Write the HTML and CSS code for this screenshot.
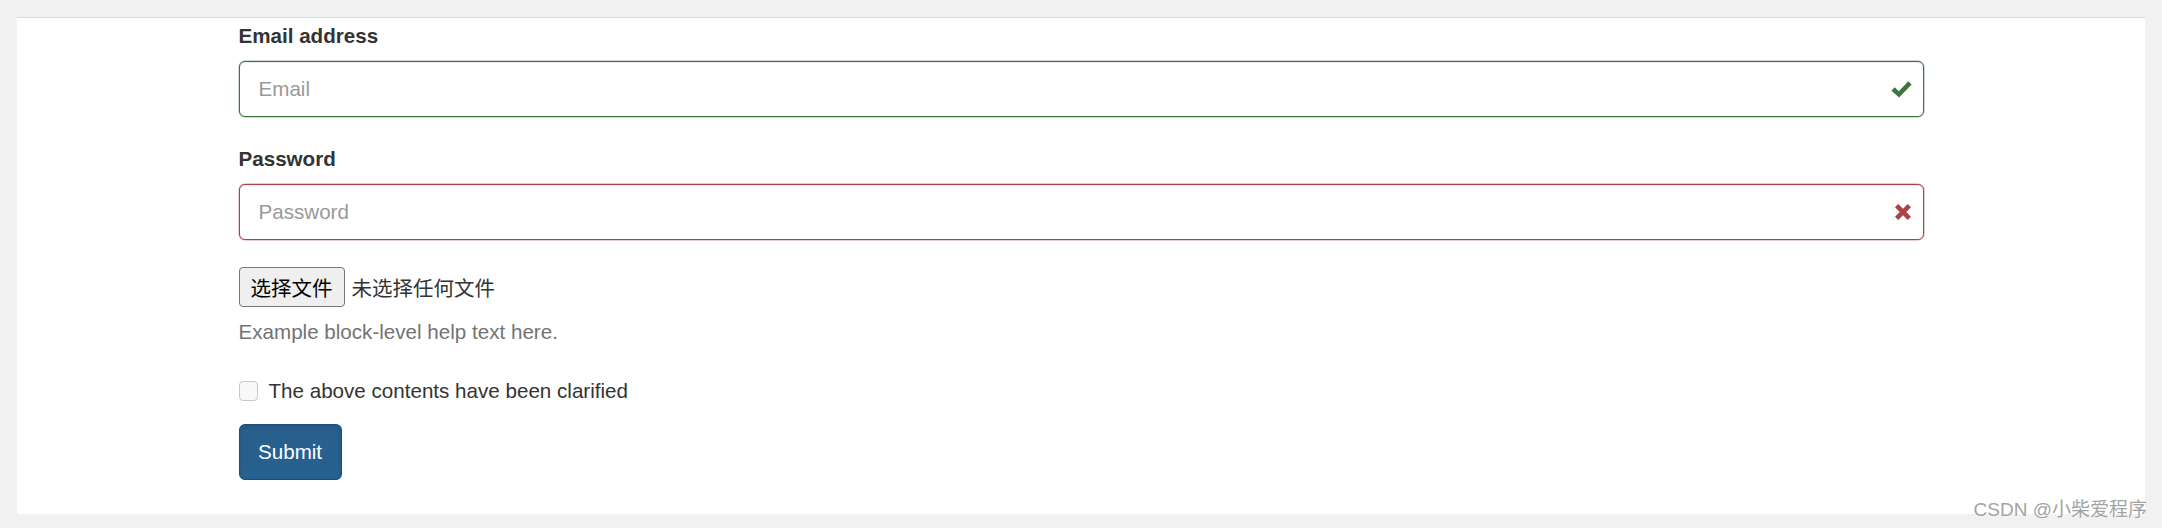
FILE: index.html
```html
<!DOCTYPE html>
<html lang="zh-CN">
<head>
  <meta charset="UTF-8" />
  <title>表单验证</title>
  <link rel="stylesheet" href="styles.css">
</head>
<body>

  <div class="panel">
    <form class="form-box" onsubmit="return false">
      <div class="form-group">
        <label class="field-label" for="email">Email address</label>
        <div class="field has-success">
          <input type="email" id="email" class="form-control" placeholder="Email" />
          <svg class="feedback" width="21" height="18" viewBox="0 0 21 18">
            <path d="M2 9 L8 14.4 L19 2.8" fill="none" stroke="#3c763d" stroke-width="4.6" />
          </svg>
        </div>
      </div>

      <div class="form-group">
        <label class="field-label" for="password">Password</label>
        <div class="field has-error">
          <input type="password" id="password" class="form-control" placeholder="Password" />
          <svg class="feedback" width="18" height="18" viewBox="0 0 18 18">
            <path d="M2.6 2.6 L15.4 15.4 M15.4 2.6 L2.6 15.4" fill="none" stroke="#a94442" stroke-width="4.6" />
          </svg>
        </div>
      </div>

      <div class="file-row">
        <label class="file-btn" for="upload">选择文件</label>
        <input type="file" id="upload" class="file-hidden" />
        <span class="file-name">未选择任何文件</span>
      </div>
      <p class="help-block">Example block-level help text here.</p>

      <label class="check-row">
        <span class="check-box"></span>
        <span>The above contents have been clarified</span>
      </label>

      <button type="submit" class="submit-btn">Submit</button>
    </form>
  </div>

  <div class="watermark">CSDN @小柴爱程序</div>

</body>
</html>
```

FILE: styles.css
```css
body {
  margin: 0;
  padding: 17px 17px 14px;
  background-color: #f1f1f1;
  font-family: "Liberation Sans", Arial, "Noto Sans CJK SC", sans-serif;
  font-size: 20.6px;
  line-height: 30px;
  color: #333;
  position: relative;
}

.panel {
  background-color: #fff;
  border-top: 1px solid #dadada;
  padding: 3px 0 34px;
}

.form-box {
  max-width: 1685px;
  margin: 0 auto;
}

.form-group {
  margin-bottom: 27px;
}

.field-label {
  display: block;
  font-weight: bold;
  margin-bottom: 10px;
}

.field {
  position: relative;
}

.form-control {
  display: block;
  box-sizing: border-box;
  width: 100%;
  height: 56px;
  padding: 0 19px;
  border: 1px solid #ccc;
  border-radius: 6px;
  font-family: inherit;
  font-size: 20.6px;
  color: #555;
  outline: none;
}

.form-control::placeholder {
  color: #999;
}

.has-success .form-control {
  border-color: #3c763d;
  box-shadow: 0 0 0 0.5px rgba(60,118,61,0.5), inset 0 1px 1px rgba(0,0,0,0.075);
}

.has-error .form-control {
  border-color: #a94442;
  box-shadow: 0 0 0 0.5px rgba(169,68,66,0.5), inset 0 1px 1px rgba(0,0,0,0.075);
}

.feedback {
  position: absolute;
  right: 12px;
  top: 19px;
}

.file-row {
  display: flex;
  align-items: center;
  gap: 7px;
  font-family: "Noto Sans CJK SC", sans-serif;
  font-size: 20.5px;
}

.file-btn {
  box-sizing: border-box;
  height: 40px;
  padding: 0 11px;
  display: flex;
  align-items: center;
  background-color: #efefef;
  border: 1px solid #767676;
  border-radius: 4px;
  color: #000;
}

.file-hidden {
  display: none;
}

.file-name {
  color: #333;
}

.help-block {
  margin: 10px 0 0;
  color: #737373;
}

.check-row {
  display: flex;
  align-items: center;
  gap: 11px;
  margin-top: 29px;
}

.check-box {
  box-sizing: border-box;
  width: 19px;
  height: 20px;
  border: 1px solid #c9c9c9;
  border-radius: 4px;
  background-color: #f8f8f8;
}

.submit-btn {
  margin-top: 18px;
  box-sizing: border-box;
  height: 56px;
  padding: 0 18.5px;
  background-color: #27608f;
  background-image: linear-gradient(to bottom, #285f8d 0, #27618f 100%);
  border: 1px solid #1f4f79;
  border-radius: 6px;
  box-shadow: inset 0 2px 4px rgba(0,0,0,0.12);
  color: #fff;
  font-family: inherit;
  font-size: 20.6px;
}

.watermark {
  position: absolute;
  right: 15px;
  bottom: 6px;
  font-family: "Liberation Sans", "Noto Sans CJK SC", sans-serif;
  font-size: 19px;
  line-height: 24px;
  color: #a3a3a3;
  text-shadow: 0 0 2px #fff, 0 0 1px #fff;
}
```
